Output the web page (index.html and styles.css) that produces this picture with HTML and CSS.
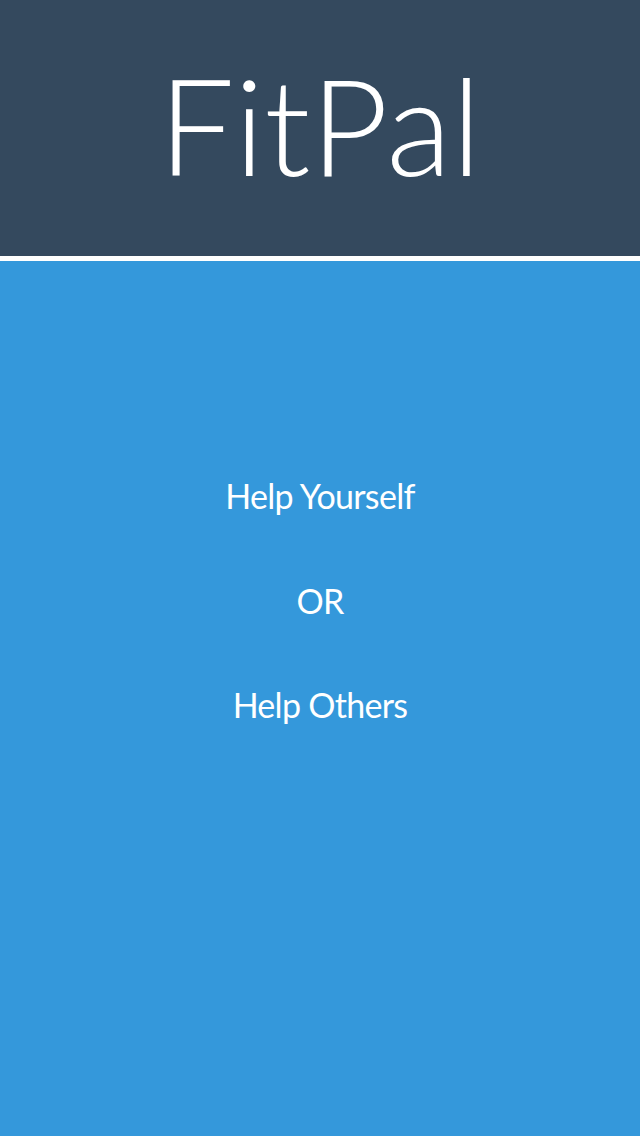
FILE: index.html
```html
<!DOCTYPE html>
<html>
<head>
<meta charset="utf-8">
<link rel="stylesheet" href="styles.css">
</head>
<body>
<div class="app">
  <header class="header">
    <h1 class="logo">FitPal</h1>
  </header>
  <main class="main">
    <div class="choices">
      <div class="choice">Help Yourself</div>
      <div class="choice">OR</div>
      <div class="choice">Help Others</div>
    </div>
  </main>
</div>
</body>
</html>
```
FILE: styles.css
```css
html, body {
  margin: 0;
  padding: 0;
  height: 100%;
}
body {
  background: #ffffff;
  font-family: Lato, "Open Sans", sans-serif;
}
.app {
  display: flex;
  flex-direction: column;
  height: 1136px;
  width: 640px;
  gap: 5px;
}
.header {
  height: 256px;
  background: #34495e;
  display: flex;
  align-items: center;
  justify-content: center;
  padding-bottom: 8px;
  box-sizing: border-box;
}
.logo {
  margin: 0;
  color: #ffffff;
  font-family: Lato, sans-serif;
  font-weight: 300;
  font-size: 135px;
  line-height: 1;
  letter-spacing: 0;
}
.main {
  flex: 1;
  background: #3498db;
  padding-top: 183px;
}
.choices {
  display: flex;
  flex-direction: column;
  align-items: center;
}
.choice {
  color: #ffffff;
  font-size: 34px;
  line-height: 104.5px;
  height: 104.5px;
  letter-spacing: -0.7px;
}
```
